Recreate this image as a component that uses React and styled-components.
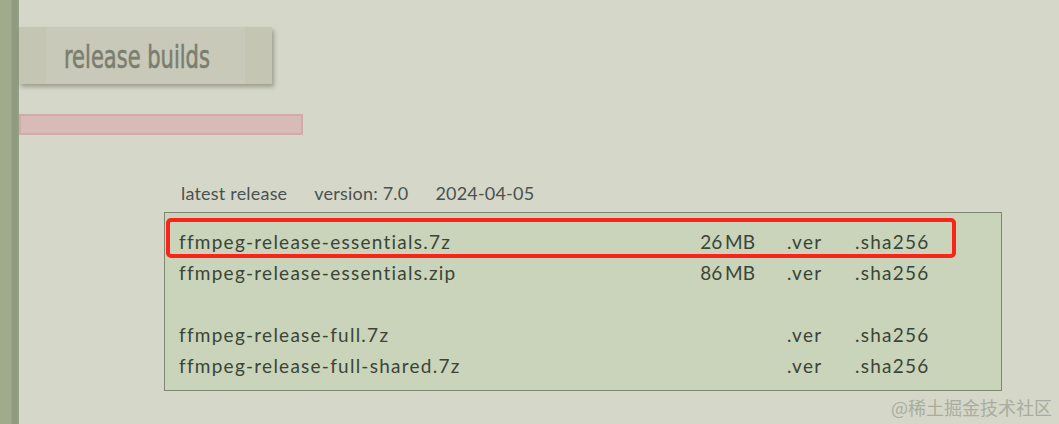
import React from 'react';
import styled, { createGlobalStyle } from 'styled-components';

const GlobalStyle = createGlobalStyle`
  html, body {
    margin: 0;
    padding: 0;
    background: #d5d8c8;
  }
  body {
    font-family: 'Lato', 'Noto Sans', sans-serif;
  }
`;

const Page = styled.div`
  width: 1059px;
  height: 424px;
  display: flex;
  position: relative;
  overflow: hidden;
`;

const Rail = styled.div`
  width: 19px;
  flex: none;
  background: linear-gradient(to right, #a0ab8e 0, #a0ab8e 11px, #8f9a80 12px, #8f9a80 17px, #98a388 19px);
`;

const Main = styled.main`
  flex: 1;
  padding-top: 27px;
  display: flex;
  flex-direction: column;
`;

const Tab = styled.div`
  width: 253px;
  height: 57px;
  background: #c4c5b3;
  box-shadow: 2px 3px 4px rgba(90, 92, 75, 0.45);
  display: flex;
  justify-content: center;
`;

const TabInner = styled.div`
  width: 199px;
  background: #c8c9b8;
  display: flex;
  align-items: center;
  padding-left: 18px;
  box-sizing: border-box;
`;

const Title = styled.h2`
  margin: 3px 0 0;
  font-family: 'DejaVu Sans Condensed', 'Liberation Sans', sans-serif;
  font-weight: normal;
  font-size: 32px;
  color: #7b7e6f;
  -webkit-text-stroke: 0.6px #7b7e6f;
  transform: scaleX(0.73);
  transform-origin: left center;
  white-space: nowrap;
`;

const PinkBar = styled.div`
  margin-top: 30px;
  width: 284px;
  height: 21px;
  box-sizing: border-box;
  background: #d8bab6;
  border: 2px solid #d1aba7;
`;

const Content = styled.section`
  margin: 48px 0 0 145px;
`;

const Info = styled.div`
  display: flex;
  gap: 27px;
  padding-left: 17px;
  font-size: 18px;
  letter-spacing: 0.2px;
  color: #4b5052;
  line-height: 20px;
`;

const Table = styled.div`
  margin-top: 9px;
  width: 838px;
  box-sizing: border-box;
  border: 1px solid #7f8772;
  background: #c9d4ba;
  padding: 13px 0 9px;
`;

const Row = styled.div`
  position: relative;
  display: grid;
  grid-template-columns: 500px 76px 100px 1fr;
  padding-left: 14px;
  height: 31px;
  line-height: 31px;
  font-size: 19px;
  letter-spacing: 1.25px;
  color: #3b4537;

  ${(p) =>
    p.$marked &&
    `
    &::after {
      content: '';
      position: absolute;
      left: 1px;
      right: 45px;
      top: -8px;
      bottom: -1px;
      border: 4px solid #fb2418;
      border-radius: 5px;
    }
  `}
`;

const Name = styled.span`
  white-space: nowrap;
`;

const Size = styled.span`
  text-align: right;
  letter-spacing: 0;
  word-spacing: -2px;
`;

const Ver = styled.span`
  padding-left: 32px;
`;

const Watermark = styled.div`
  position: absolute;
  right: 7px;
  bottom: 4px;
  font-family: 'Noto Sans CJK SC', sans-serif;
  font-size: 18px;
  color: #a9aca0;
`;

const rows = [
  { name: 'ffmpeg-release-essentials.7z', size: '26 MB', marked: true },
  { name: 'ffmpeg-release-essentials.zip', size: '86 MB' },
  null,
  { name: 'ffmpeg-release-full.7z', size: '' },
  { name: 'ffmpeg-release-full-shared.7z', size: '' },
];

export default function App() {
  return (
    <>
      <GlobalStyle />
      <Page>
        <Rail />
        <Main>
          <Tab>
            <TabInner>
              <Title>release builds</Title>
            </TabInner>
          </Tab>
          <PinkBar />
          <Content>
            <Info>
              <span>latest release</span>
              <span>version: 7.0</span>
              <span>2024-04-05</span>
            </Info>
            <Table>
              {rows.map((r, i) =>
                r ? (
                  <Row key={i} $marked={r.marked}>
                    <Name>{r.name}</Name>
                    <Size>{r.size}</Size>
                    <Ver>.ver</Ver>
                    <span>.sha256</span>
                  </Row>
                ) : (
                  <Row key={i} />
                )
              )}
            </Table>
          </Content>
        </Main>
        <Watermark>@稀土掘金技术社区</Watermark>
      </Page>
    </>
  );
}
